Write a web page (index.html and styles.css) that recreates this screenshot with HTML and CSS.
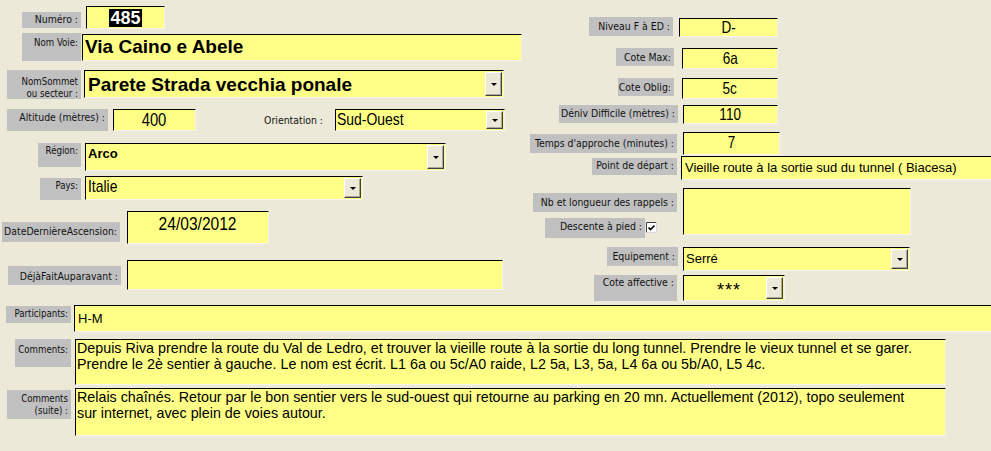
FILE: index.html
```html
<!DOCTYPE html>
<html lang="fr">
<head>
<meta charset="utf-8">
<title>Voie</title>
<link rel="stylesheet" href="styles.css">
</head>
<body>
<div class="top">
  <div class="col-left">
    <div class="row r-num">
      <div class="lbl l-num">Numéro :</div>
      <div class="fld f-num"><span class="sel">485</span></div>
    </div>
    <div class="row r-voie">
      <div class="lbl sm l-voie">Nom Voie:</div>
      <div class="fld big f-voie">Via Caino e Abele</div>
    </div>
    <div class="row r-sommet">
      <div class="lbl sm l-sommet">NomSommet<br>ou secteur :</div>
      <div class="fld combo big f-sommet"><span class="val">Parete Strada vecchia ponale</span><span class="btn"></span></div>
    </div>
    <div class="row r-alt">
      <div class="lbl l-alt">Altitude (mètres) :</div>
      <div class="fld narrow ctr f-alt"><span class="nw c">400</span></div>
      <div class="plain l-orient">Orientation :</div>
      <div class="fld combo narrow f-orient"><span class="val"><span class="nw">Sud-Ouest</span></span><span class="btn"></span></div>
    </div>
    <div class="row r-reg">
      <div class="lbl sm l-reg">Région:</div>
      <div class="fld combo f-reg"><span class="val">Arco</span><span class="btn"></span></div>
    </div>
    <div class="row r-pays">
      <div class="lbl sm l-pays">Pays:</div>
      <div class="fld combo narrow f-pays"><span class="val"><span class="nw">Italie</span></span><span class="btn"></span></div>
    </div>
    <div class="row r-date">
      <div class="lbl l-date">DateDernièreAscension:</div>
      <div class="fld narrow ctr f-date"><span class="nw c">24/03/2012</span></div>
    </div>
    <div class="row r-deja">
      <div class="lbl l-deja">DéjàFaitAuparavant :</div>
      <div class="fld f-deja"></div>
    </div>
  </div>
  <div class="col-right">
    <div class="row r-niv">
      <div class="lbl l-niv">Niveau F à ED :</div>
      <div class="fld narrow ctr rf f-niv"><span class="nw c">D-</span></div>
    </div>
    <div class="row r-max">
      <div class="lbl l-max">Cote Max:</div>
      <div class="fld narrow ctr rf f-max"><span class="nw c">6a</span></div>
    </div>
    <div class="row r-obl">
      <div class="lbl l-obl">Cote Oblig:</div>
      <div class="fld narrow ctr rf f-obl"><span class="nw c">5c</span></div>
    </div>
    <div class="row r-den">
      <div class="lbl l-den">Déniv Difficile (mètres) :</div>
      <div class="fld narrow ctr rf f-den"><span class="nw c">110</span></div>
    </div>
    <div class="row r-tmp">
      <div class="lbl l-tmp">Temps d'approche (minutes) :</div>
      <div class="fld narrow ctr rf f-tmp"><span class="nw c">7</span></div>
    </div>
    <div class="row r-pt">
      <div class="lbl l-pt">Point de départ :</div>
      <div class="fld txt f-pt">Vieille route à la sortie sud du tunnel ( Biacesa)</div>
    </div>
    <div class="row r-nb">
      <div class="nb-stack">
        <div class="lbl l-nb">Nb et longueur des rappels :</div>
        <div class="desc-row">
          <div class="lbl l-desc">Descente à pied :</div>
          <svg class="chk" width="11" height="11" viewBox="0 0 11 11" aria-hidden="true">
            <rect x="0" y="0" width="11" height="11" fill="#fff"/>
            <path d="M0.5 10.5V0.5H10.5" fill="none" stroke="#404040"/>
            <path d="M10.5 0.5V10.5H0.5" fill="none" stroke="#d8d8d8"/>
            <path d="M2.5 5.5L4.5 7.5L8.5 3.5" fill="none" stroke="#000" stroke-width="1.6"/>
          </svg>
        </div>
      </div>
      <div class="fld f-nb"></div>
    </div>
    <div class="row r-eq">
      <div class="lbl l-eq">Equipement :</div>
      <div class="fld combo txt f-eq"><span class="val">Serré</span><span class="btn"></span></div>
    </div>
    <div class="row r-aff">
      <div class="lbl l-aff">Cote affective :</div>
      <div class="fld combo f-aff"><span class="val">***</span><span class="btn"></span></div>
    </div>
  </div>
</div>
<div class="bottom">
  <div class="row r-part">
    <div class="lbl sm l-part">Participants:</div>
    <div class="fld txt f-part">H-M</div>
  </div>
  <div class="row r-com">
    <div class="lbl sm l-com">Comments:</div>
    <div class="fld multi f-com">Depuis Riva prendre la route du Val de Ledro, et trouver la vieille route à la sortie du long tunnel. Prendre le vieux tunnel et se garer.<br>Prendre le 2è sentier à gauche. Le nom est écrit. L1 6a ou 5c/A0 raide, L2 5a, L3, 5a, L4 6a ou 5b/A0, L5 4c.</div>
  </div>
  <div class="row r-suite">
    <div class="lbl sm l-suite">Comments<br>(suite) :</div>
    <div class="fld multi f-suite">Relais chaînés. Retour par le bon sentier vers le sud-ouest qui retourne au parking en 20 mn. Actuellement (2012), topo seulement<br>sur internet, avec plein de voies autour.</div>
  </div>
</div>
</body>
</html>
```

FILE: styles.css
```css
html, body {
  margin: 0;
  overflow: hidden;
}
body {
  width: 991px;
  height: 451px;
  background: #ece9d8;
  font-family: "Liberation Sans", Arial, sans-serif;
  color: #000;
}
.top {
  display: flex;
  align-items: flex-start;
  height: 298px;
}
.col-left {
  width: 527px;
  flex: none;
}
.col-right {
  flex: 1;
}
.row {
  display: flex;
  align-items: flex-start;
}

/* labels */
.lbl,
.plain {
  box-sizing: border-box;
  flex: none;
  color: #111;
  font-family: "DejaVu Sans Condensed", "DejaVu Sans", sans-serif;
  font-stretch: condensed;
  font-size: 10.4px;
  line-height: 13px;
  text-align: right;
  white-space: nowrap;
}
.lbl {
  background: #c0c0c0;
  padding: 2px 3px 0 0;
}
.lbl.sm {
  font-size: 9.6px;
  line-height: 12px;
}

/* fields */
.fld {
  box-sizing: border-box;
  flex: none;
  background: #ffff88;
  border: 1px solid;
  border-color: #000 #f6f6ee #f6f6ee #000;
  overflow: hidden;
  white-space: nowrap;
}
.combo {
  display: flex;
  align-items: stretch;
}
.combo .val {
  flex: 1;
  overflow: hidden;
}
.btn {
  box-sizing: border-box;
  flex: none;
  width: 17px;
  margin: 1px;
  background: #ece9d8;
  border: 1px solid;
  border-color: #fff #404040 #404040 #fff;
  box-shadow: inset -1px -1px 0 #aca899;
  display: flex;
  align-items: center;
  justify-content: center;
}
.btn::after {
  content: "";
  width: 0;
  height: 0;
  border-left: 3px solid transparent;
  border-right: 3px solid transparent;
  border-top: 3px solid #000;
}
.ctr {
  text-align: center;
}
.big {
  font-weight: bold;
  font-size: 19px;
  line-height: 22px;
}
.narrow {
  font-size: 17px;
  line-height: 18px;
}
.nw {
  display: inline-block;
  transform: scaleX(0.82);
  transform-origin: 0 0;
}
.nw.c {
  transform-origin: 50% 0;
}
.txt {
  font-size: 13px;
  line-height: 16px;
}
.multi {
  white-space: normal;
  font-size: 14.3px;
  line-height: 16px;
}
.rf {
  font-size: 16.5px;
  line-height: 17px;
}

/* left column */
.r-num { margin-top: 6px; }
.l-num { margin: 6px 0 0 22px; width: 59px; height: 16px; padding-top: 1px; }
.f-num { margin-left: 5px; width: 79px; height: 23px; text-align: center; }
.sel {
  display: inline-block;
  margin-top: 2px;
  padding: 0 1px;
  height: 18px;
  background: #000;
  color: #fff;
  font-weight: bold;
  font-size: 18px;
  line-height: 19px;
}

.r-voie { margin-top: 4px; }
.l-voie { margin-left: 22px; width: 59px; height: 28px; padding-top: 4px; }
.f-voie { margin: 1px 0 0 1px; width: 440px; height: 27px; padding: 1px 0 0 2px; }

.r-sommet { margin-top: 9px; }
.l-sommet { margin-left: 7px; width: 74px; height: 29px; line-height: 10px; padding-top: 6px; }
.f-sommet { margin-left: 3px; width: 420px; height: 28px; }
.f-sommet .val { padding: 3px 0 0 3px; }

.r-alt { margin-top: 10px; }
.l-alt { margin-left: 7px; width: 101px; height: 22px; padding-top: 2px; }
.f-alt { margin-left: 5px; width: 83px; height: 22px; font-size: 18px; line-height: 20px; }
.l-orient { width: 135px; height: 22px; padding: 5px 8px 0 0; }
.f-orient { margin-left: 4px; width: 170px; height: 22px; }
.f-orient .val { padding: 1px 0 0 1px; }

.r-reg { margin-top: 12px; }
.l-reg { margin-left: 38px; width: 43px; height: 24px; padding-top: 2px; }
.f-reg { margin-left: 4px; width: 361px; height: 28px; }
.f-reg .val { padding: 2px 0 0 2px; font-weight: bold; font-size: 13px; line-height: 15px; }

.r-pays { margin-top: 5px; }
.l-pays { margin: 2px 0 0 40px; width: 41px; height: 22px; padding-top: 2px; }
.f-pays { margin-left: 4px; width: 278px; height: 24px; }
.f-pays .val { padding: 1px 0 0 2px; }

.r-date { margin-top: 11px; }
.l-date { margin: 11px 0 0 2px; width: 118px; height: 20px; padding-top: 3px; }
.f-date { margin-left: 7px; width: 142px; height: 33px; font-size: 19px; line-height: 22px; padding-top: 1px; }

.r-deja { margin-top: 16px; }
.l-deja { margin: 6px 0 0 8px; width: 113px; height: 19px; padding-top: 4px; }
.f-deja { margin-left: 6px; width: 376px; height: 30px; }

/* right column */
.r-niv { margin-top: 17px; }
.l-niv { margin-left: 62px; width: 84px; height: 19px; padding-top: 3px; }
.f-niv { margin: 1px 0 0 6px; width: 99px; height: 19px; }

.r-max { margin-top: 11px; }
.l-max { margin-left: 89px; width: 58px; height: 18px; padding-top: 3px; }
.f-max { margin-left: 8px; width: 96px; height: 21px; padding-top: 1px; }

.r-obl { margin-top: 9px; }
.l-obl { margin-left: 91px; width: 56px; height: 18px; padding-top: 3px; }
.f-obl { margin-left: 8px; width: 96px; height: 21px; padding-top: 1px; }

.r-den { margin-top: 6px; }
.l-den { margin-left: 32px; width: 119px; height: 18px; padding-top: 2px; }
.f-den { margin-left: 5px; width: 95px; height: 19px; }

.r-tmp { margin-top: 8px; }
.l-tmp { margin: 2px 0 0 3px; width: 147px; height: 19px; padding-top: 3px; }
.f-tmp { margin-left: 6px; width: 97px; height: 23px; padding-top: 1px; }

.r-pt { margin-top: 1px; }
.l-pt { margin: 2px 0 0 65px; width: 85px; height: 17px; padding-top: 1px; }
.f-pt { margin-left: 4px; width: 330px; height: 24px; padding: 3px 0 0 3px; }

.r-nb { margin-top: 8px; }
.nb-stack { width: 150px; flex: none; }
.l-nb { margin: 5px 0 0 6px; width: 144px; height: 19px; padding-top: 3px; }
.desc-row { display: flex; align-items: flex-start; margin: 6px 0 0 18px; }
.l-desc { width: 100px; height: 20px; padding-top: 2px; }
.chk { flex: none; margin: 4px 0 0 1px; }
.f-nb { margin-left: 6px; width: 228px; height: 47px; }

.r-eq { margin-top: 9px; }
.l-eq { margin-left: 80px; width: 71px; height: 19px; padding-top: 3px; }
.f-eq { margin-left: 5px; width: 227px; height: 24px; }
.f-eq .val { padding: 3px 0 0 2px; }

.r-aff { margin-top: 4px; }
.l-aff { margin-left: 67px; width: 83px; height: 26px; padding-top: 1px; }
.f-aff { margin-left: 6px; width: 102px; height: 26px; }
.f-aff .val { text-align: center; font-size: 18px; line-height: 20px; letter-spacing: 1px; padding: 4px 0 0 9px; }

/* bottom */
.r-part { margin-top: 7px; }
.l-part { margin: 1px 0 0 6px; width: 65px; height: 17px; padding-top: 2px; }
.f-part { margin-left: 3px; width: 930px; height: 27px; padding: 5px 0 0 3px; }

.r-com { margin-top: 7px; }
.l-com { margin-left: 15px; width: 56px; height: 28px; padding-top: 5px; }
.f-com { margin-left: 4px; width: 871px; height: 46px; padding: 0 0 0 1px; }

.r-suite { margin-top: 3px; }
.l-suite { margin: 2px 0 0 7px; width: 64px; height: 29px; line-height: 11px; padding-top: 3px; }
.f-suite { margin-left: 4px; width: 871px; height: 48px; padding: 0 0 0 1px; }
```
